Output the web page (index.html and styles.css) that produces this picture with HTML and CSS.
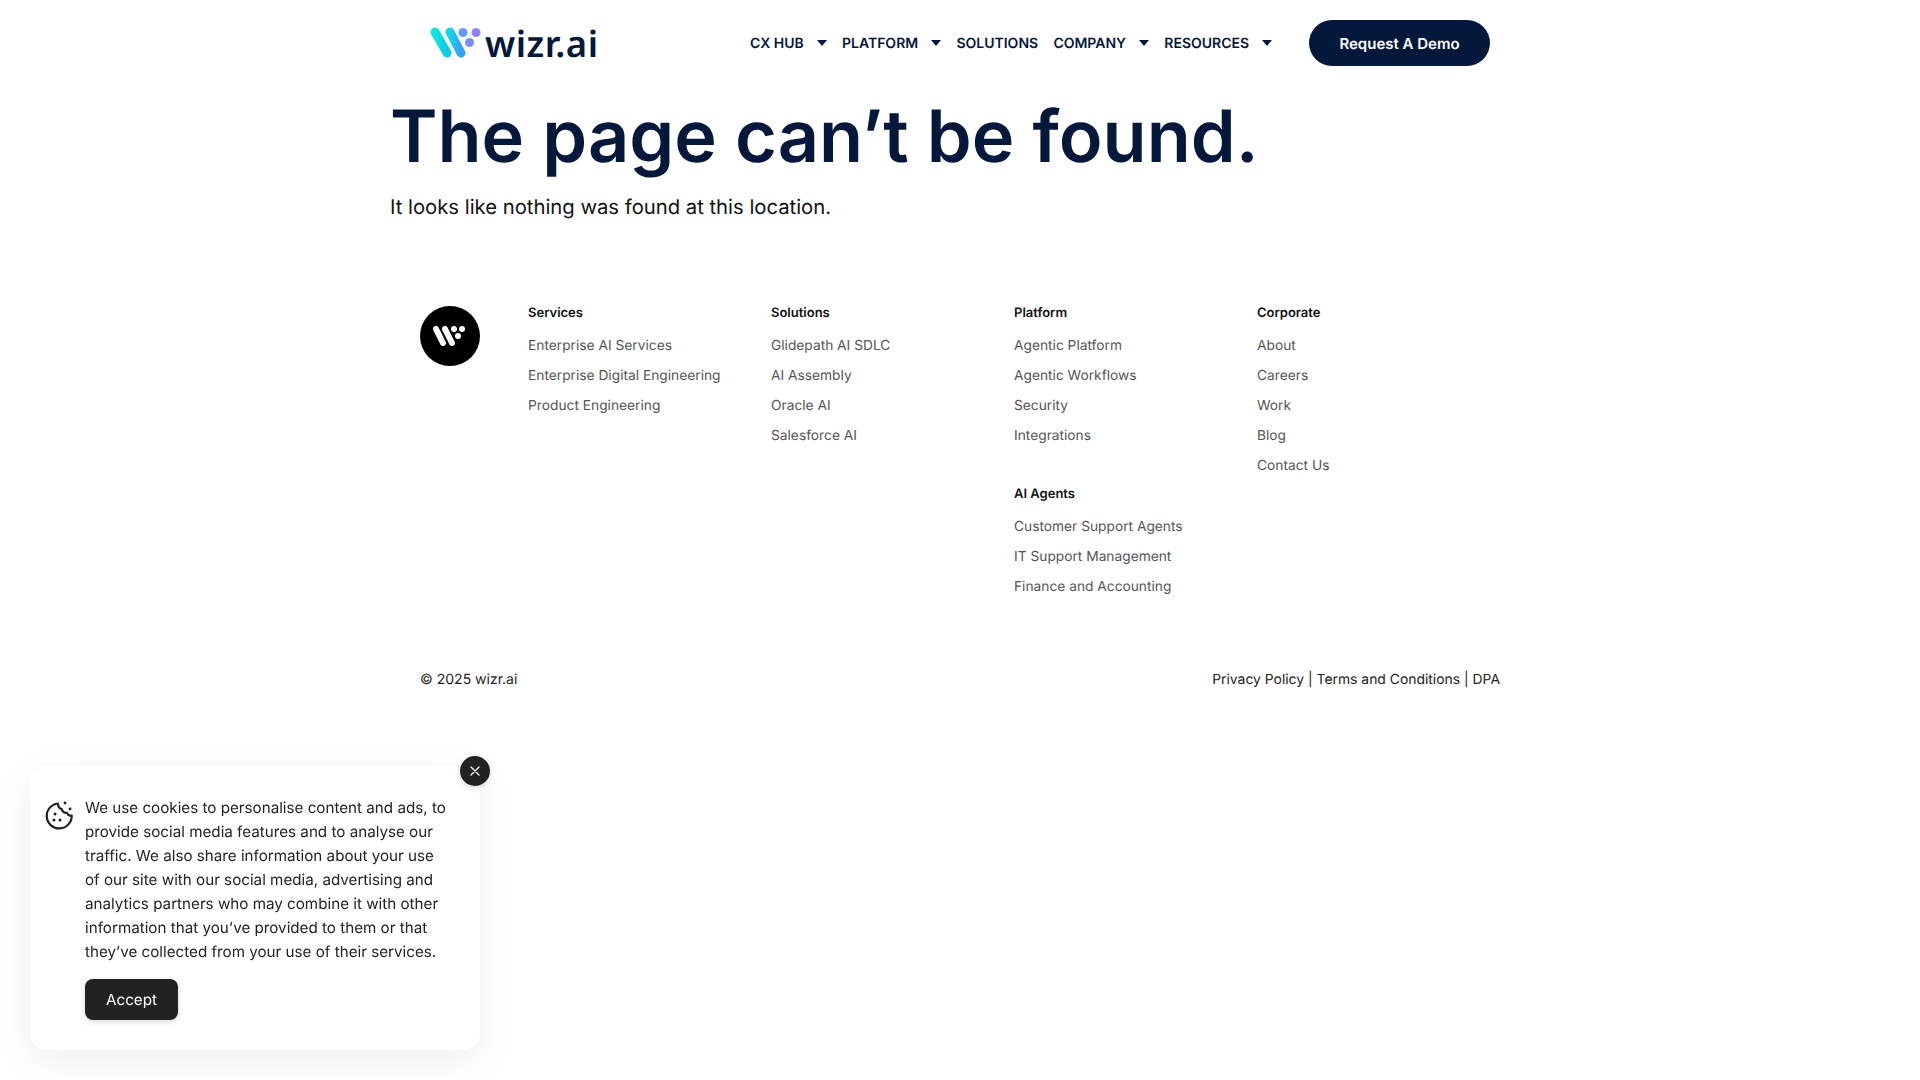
FILE: index.html
```html
<!DOCTYPE html>
<html lang="en">
<head>
<meta charset="utf-8">
<title>Page not found - wizr.ai</title>
<link rel="stylesheet" href="styles.css">
</head>
<body>
<div class="page">
  <header class="header">
    <a class="logo" href="#">
      <svg class="logo-mark" width="52" height="32" viewBox="0 0 52 32">
        <defs>
          <linearGradient id="g1" x1="0" y1="0" x2="1" y2="0"><stop offset="0" stop-color="#0fe8d8"/><stop offset="1" stop-color="#12c8ee"/></linearGradient>
          <linearGradient id="g2" x1="0" y1="0" x2="1" y2="0"><stop offset="0" stop-color="#12d4ea"/><stop offset="1" stop-color="#3d9cf8"/></linearGradient>
        </defs>
        <line x1="5" y1="5" x2="17" y2="26" stroke="url(#g1)" stroke-width="9" stroke-linecap="round"/>
        <line x1="20" y1="5" x2="31" y2="26" stroke="url(#g2)" stroke-width="9" stroke-linecap="round"/>
        <circle cx="33" cy="5.500" r="4.500" fill="#5f9bfb"/>
        <circle cx="46" cy="5.500" r="4.500" fill="#9080fb"/>
        <circle cx="39.500" cy="15.500" r="4.500" fill="#7d8cfb"/>
      </svg>
      <span class="logo-text">wizr.ai</span>
    </a>
    <nav class="nav">
      <a class="nav-item" href="#">CX HUB<i class="caret"></i></a>
      <a class="nav-item" href="#">PLATFORM<i class="caret"></i></a>
      <a class="nav-item" href="#">SOLUTIONS</a>
      <a class="nav-item" href="#">COMPANY<i class="caret"></i></a>
      <a class="nav-item" href="#">RESOURCES<i class="caret"></i></a>
    </nav>
    <a class="demo" href="#">Request A Demo</a>
  </header>

  <main class="main">
    <h1 class="title">The page can’t be found.</h1>
    <p class="lead">It looks like nothing was found at this location.</p>
  </main>

  <footer class="footer">
    <div class="footer-top">
      <div class="badge-col">
        <span class="badge">
          <svg width="36" height="24" viewBox="0 0 36 24">
            <line x1="4" y1="5" x2="11" y2="19" stroke="#fff" stroke-width="6" stroke-linecap="round"/>
            <line x1="13" y1="5" x2="20" y2="19" stroke="#fff" stroke-width="6" stroke-linecap="round"/>
            <circle cx="22" cy="5" r="3" fill="#fff"/>
            <circle cx="30" cy="5" r="3" fill="#fff"/>
            <circle cx="26" cy="12" r="3" fill="#fff"/>
          </svg>
        </span>
      </div>
      <div class="fcol">
        <h4 class="fhead">Services</h4>
        <ul class="flist"><li>Enterprise AI Services</li><li>Enterprise Digital Engineering</li><li>Product Engineering</li></ul>
      </div>
      <div class="fcol">
        <h4 class="fhead">Solutions</h4>
        <ul class="flist"><li>Glidepath AI SDLC</li><li>AI Assembly</li><li>Oracle AI</li><li>Salesforce AI</li></ul>
      </div>
      <div class="fcol">
        <h4 class="fhead">Platform</h4>
        <ul class="flist"><li>Agentic Platform</li><li>Agentic Workflows</li><li>Security</li><li>Integrations</li></ul>
        <h4 class="fhead fhead-next">AI Agents</h4>
        <ul class="flist"><li>Customer Support Agents</li><li>IT Support Management</li><li>Finance and Accounting</li></ul>
      </div>
      <div class="fcol">
        <h4 class="fhead">Corporate</h4>
        <ul class="flist"><li>About</li><li>Careers</li><li>Work</li><li>Blog</li><li>Contact Us</li></ul>
      </div>
    </div>
    <div class="footer-bottom">
      <span>© 2025 wizr.ai</span>
      <span class="legal">Privacy Policy | Terms and Conditions | DPA</span>
    </div>
  </footer>
</div>

<aside class="cookie">
  <button class="cookie-close" aria-label="Close">
    <svg width="10" height="10" viewBox="0 0 10 10"><path d="M1 1L9 9M9 1L1 9" stroke="#fff" stroke-width="1.300" stroke-linecap="round"/></svg>
  </button>
  <svg class="cookie-icon" width="30" height="30" viewBox="0 0 30 30" fill="none">
    <path d="M14 3.500A12.500 12.500 0 1 0 27.700 15.500C25.500 16 23.600 14.800 23 12.800C20.500 13.200 18 11.600 17.700 9C15.500 8.600 13.800 6 14 3.500Z" stroke="#222" stroke-width="2.200" stroke-linejoin="round"/>
    <circle cx="21" cy="3" r="1.400" fill="#222"/><circle cx="26" cy="9" r="1.400" fill="#222"/>
    <circle cx="11" cy="14" r="1.500" fill="#222"/><circle cx="10" cy="20" r="1.500" fill="#222"/><circle cx="16" cy="20" r="1.500" fill="#222"/>
  </svg>
  <div class="cookie-body">
    <p class="cookie-text">We use cookies to personalise content and ads, to provide social media features and to analyse our traffic. We also share information about your use of our site with our social media, advertising and analytics partners who may combine it with other information that you’ve provided to them or that they’ve collected from your use of their services.</p>
    <button class="accept">Accept</button>
  </div>
</aside>
</body>
</html>
```
FILE: styles.css
```css
* { box-sizing: border-box; }
html, body { margin: 0; padding: 0; }
body { background: #fff; font-family: Inter, "Liberation Sans", sans-serif; color: #04183b; height: 1080px; overflow: hidden; text-rendering: geometricPrecision; }
a { color: inherit; text-decoration: none; }
.page { width: 1140px; margin: 0 auto; }

.header { display: flex; align-items: center; height: 86px; padding: 0 40px; }
.logo { display: flex; align-items: center; gap: 3px; width: 320px; }
.logo-mark { flex: none; }
.logo-text { font-family: "Noto Sans", Inter, sans-serif; font-weight: 600; font-size: 36.500px; line-height: 40px; letter-spacing: 0.5px; color: #04183b; }
.nav { display: flex; align-items: center; gap: 15.250px; font-size: 14px; font-weight: 600; }
.nav-item { display: flex; align-items: center; }
.caret { width: 0; height: 0; margin-left: 13px; border-left: 5px solid transparent; border-right: 5px solid transparent; border-top: 6px solid #04183b; }
.demo { margin-left: auto; width: 181px; height: 46px; border-radius: 23px; background: #04183b; color: #fff; display: flex; align-items: center; justify-content: center; font-weight: 600; font-size: 15px; }

.main { padding-top: 7px; }
.title { margin: 0; font-size: 72px; line-height: 88px; font-weight: 600; color: #04183b; }
.lead { margin: 10px 0 0; font-size: 20.250px; line-height: 32px; color: #111; }

.footer { margin-top: 80px; padding: 0 30px; color: #222; }
.footer-top { display: flex; }
.badge-col { width: 108px; flex: none; padding-top: 3px; }
.badge { width: 60px; height: 60px; border-radius: 50%; background: #000; display: flex; align-items: center; justify-content: center; }
.fcol { width: 243px; flex: none; }
.fhead { margin: 0; font-size: 13px; line-height: 20px; font-weight: 600; color: #111; }
.fhead-next { margin-top: 33px; }
.flist { list-style: none; margin: 8px 0 0; padding: 0; font-size: 13.750px; line-height: 30px; color: #555; }
.footer-bottom { display: flex; justify-content: space-between; margin-top: 67px; font-size: 14px; line-height: 22px; color: #222; }
.legal { font-size: 13.900px; }

.cookie { position: fixed; left: 30px; top: 766px; width: 450px; height: 284px; background: #fff; border-radius: 16px; box-shadow: 0 10px 40px rgba(0,0,0,.07); display: flex; padding: 30px 30px 0 15px; gap: 10px; }
.cookie-close { position: absolute; right: -10px; top: -10px; width: 30px; height: 30px; border: 0; padding: 0; border-radius: 50%; background: #222; display: flex; align-items: center; justify-content: center; box-shadow: 0 2px 6px rgba(0,0,0,.15); }
.cookie-icon { flex: none; margin-top: 4px; margin-left: -1px; }
.cookie-body { margin-left: 1px; }
.cookie-text { margin: 0; font-size: 15.200px; line-height: 24px; color: #222; }
.accept { margin-top: 15px; width: 93px; height: 41px; border: 0; border-radius: 8px; background: #222; color: #fff; font: 400 15.200px Inter, sans-serif; text-rendering: geometricPrecision; box-shadow: 0 2px 6px rgba(0,0,0,.15); }
```
